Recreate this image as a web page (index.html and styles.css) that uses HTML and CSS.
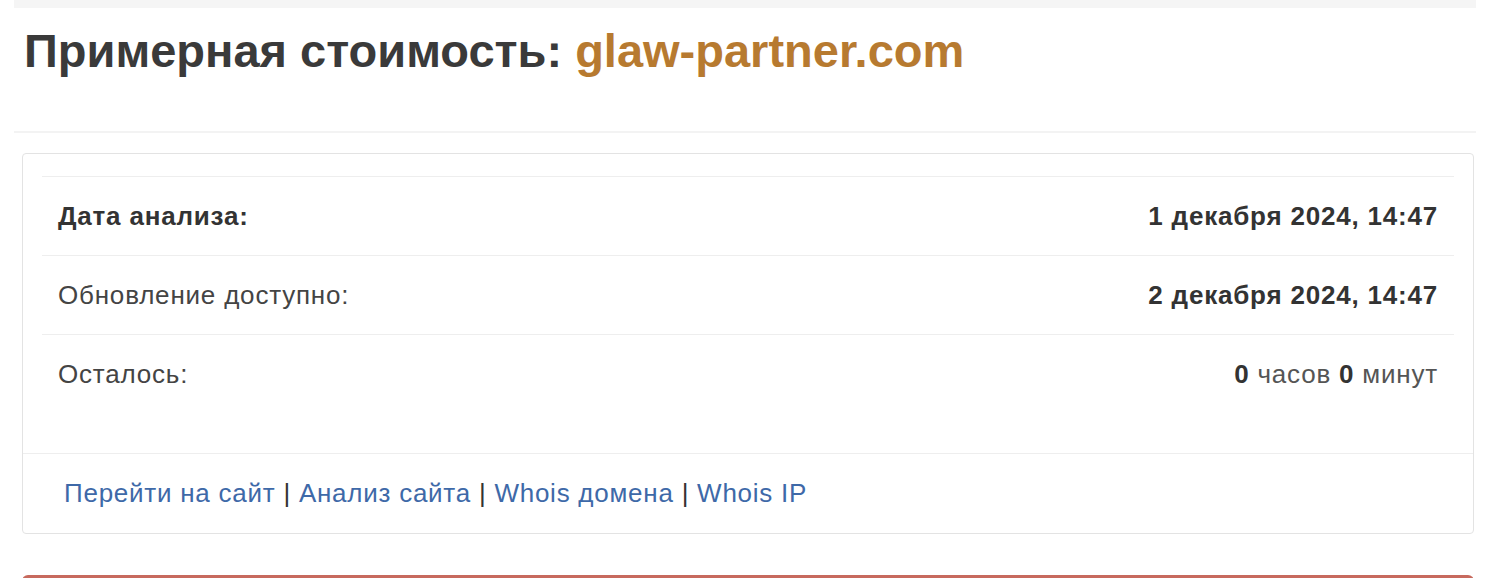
FILE: index.html
```html
<!DOCTYPE html>
<html lang="ru">
<head>
<meta charset="utf-8">
<title>Примерная стоимость: glaw-partner.com</title>
<link rel="stylesheet" href="styles.css">
</head>
<body>
<div class="page">
  <div class="top-strip"></div>
  <h1 class="title">Примерная стоимость: <span class="domain">glaw-partner.com</span></h1>
  <div class="rule"></div>
  <div class="panel">
    <div class="panel-body">
      <table class="info">
        <tr>
          <td class="label strong">Дата анализа:</td>
          <td class="value">1 декабря 2024, 14:47</td>
        </tr>
        <tr>
          <td class="label">Обновление доступно:</td>
          <td class="value">2 декабря 2024, 14:47</td>
        </tr>
        <tr>
          <td class="label">Осталось:</td>
          <td class="value light"><b>0</b> часов <b>0</b> минут</td>
        </tr>
      </table>
    </div>
    <div class="panel-footer">
      <a href="#">Перейти на сайт</a> | <a href="#">Анализ сайта</a> | <a href="#">Whois домена</a> | <a href="#">Whois IP</a>
    </div>
  </div>
  <div class="alert"></div>
</div>
</body>
</html>
```

FILE: styles.css
```css
html, body {
  margin: 0;
  padding: 0;
  background: #ffffff;
}
body {
  font-family: "Liberation Sans", Arial, sans-serif;
  color: #333333;
  height: 578px;
  overflow: hidden;
}
.page {
  margin: 0 34px 0 14px;
}
.top-strip {
  height: 8px;
  background: #f5f5f5;
}
.title {
  margin: 18px 0 0 10px;
  font-size: 47px;
  line-height: 50px;
  font-weight: bold;
  color: #3a3a3a;
  letter-spacing: 0;
}
.domain {
  color: #b77a30;
}
.rule {
  margin-top: 55px;
  height: 2px;
  background: #f3f3f3;
}
.panel {
  margin: 20px 2px 0 8px;
  border: 1px solid #e3e3e3;
  border-radius: 4px;
  background: #fff;
}
.panel-body {
  padding: 22px 19px 20px 19px;
}
.info {
  width: 100%;
  border-collapse: collapse;
  margin-bottom: 20px;
}
.info td {
  border-top: 1px solid #eeeeee;
  padding: 24px 16px;
  font-size: 26px;
  line-height: 30px;
  letter-spacing: 0.8px;
}
.label {
  color: #444;
  text-align: left;
}
.label.strong {
  font-weight: bold;
  color: #333;
}
.value {
  text-align: right;
  font-weight: bold;
  color: #333;
}
.value.light {
  font-weight: normal;
  color: #555;
}
.value.light b {
  color: #333;
}
.panel-footer {
  border-top: 1px solid #eeeeee;
  padding: 24px 20px 25px 41px;
  font-size: 26px;
  line-height: 30px;
  letter-spacing: 0.75px;
  color: #333;
}
.panel-footer a {
  color: #3e69a8;
  text-decoration: none;
}
.alert {
  margin: 41px 2px 0 8px;
  height: 20px;
  border-top: 3px solid #c76a5e;
  border-radius: 6px 6px 0 0;
  background: #f2dede;
}
```
